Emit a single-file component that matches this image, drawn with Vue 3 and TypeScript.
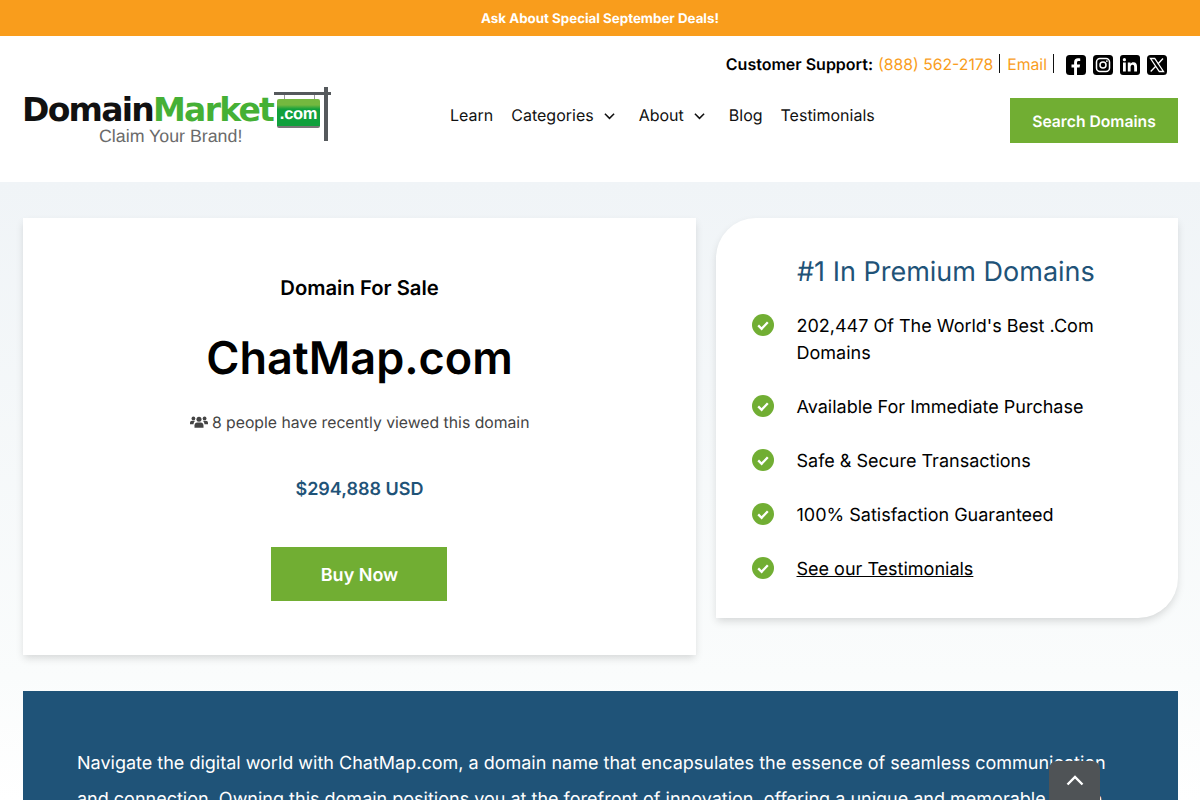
<script setup lang="ts">
const navItems = [
  { label: 'Learn', caret: false },
  { label: 'Categories', caret: true },
  { label: 'About', caret: true },
  { label: 'Blog', caret: false },
  { label: 'Testimonials', caret: false },
]

const perks = [
  "202,447 Of The World's Best .Com Domains",
  'Available For Immediate Purchase',
  'Safe & Secure Transactions',
  '100% Satisfaction Guaranteed',
]
</script>

<template>
  <div class="page">
    <div class="promo">Ask About Special September Deals!</div>

    <header class="site-header">
      <a class="logo">
        <div class="logo-name"><span class="dark">Domain</span><span class="green">Market</span></div>
        <div class="logo-tag">Claim Your Brand!</div>
        <div class="logo-sign">
          <span class="sign-hanger left"></span>
          <span class="sign-hanger right"></span>
          <span class="sign-bar"></span>
          <span class="sign-post"></span>
          <span class="sign-board">.com</span>
        </div>
      </a>

      <div class="support">
        <strong>Customer Support:</strong>
        <a class="orange phone">(888) 562-2178</a>
        <span class="sep"></span>
        <a class="orange">Email</a>
        <span class="sep"></span>
        <div class="socials">
          <svg viewBox="0 0 20 20" class="social">
            <rect width="20" height="20" rx="3.5" fill="#000" />
            <path d="M11 20v-7.6h2.6l.5-3H11V7.7c0-.9.4-1.6 1.7-1.6h1.5V3.5c-.6-.1-1.4-.2-2.2-.2-2.400 0-3.900 1.400-3.900 4v2.100H5.500v3h2.600V20z" fill="#fff" />
          </svg>
          <svg viewBox="0 0 20 20" class="social">
            <rect width="20" height="20" rx="3.5" fill="#000" />
            <rect x="3.500" y="3.500" width="13" height="13" rx="3.500" fill="none" stroke="#fff" stroke-width="1.500" />
            <circle cx="10" cy="10" r="3" fill="none" stroke="#fff" stroke-width="1.500" />
            <circle cx="13.900" cy="6.100" r=".9" fill="#fff" />
          </svg>
          <svg viewBox="0 0 20 20" class="social">
            <rect width="20" height="20" rx="3" fill="#000" />
            <rect x="3" y="7.500" width="2.800" height="9" fill="#fff" />
            <circle cx="4.400" cy="4.700" r="1.600" fill="#fff" />
            <path d="M7.800 7.500h2.700v1.300c.5-.9 1.500-1.500 2.900-1.500 2.700 0 3.600 1.700 3.600 4.300v4.900h-2.800v-4.300c0-1.300-.3-2.400-1.600-2.400-1.400 0-2 1-2 2.400v4.300H7.800z" fill="#fff" />
          </svg>
          <svg viewBox="0 0 20 20" class="social">
            <rect width="20" height="20" rx="3.500" fill="#000" />
            <path d="M3.500 3.500h4.200l8.800 13h-4.200zM16 3.500l-5.300 5.800M9 11l-5.300 5.500" fill="none" stroke="#fff" stroke-width="1.300" />
          </svg>
        </div>
      </div>

      <nav class="nav">
        <a v-for="item in navItems" :key="item.label" class="nav-link">
          {{ item.label }}
          <svg v-if="item.caret" viewBox="0 0 12 8" class="caret">
            <path d="M1 1.500l5 5 5-5" fill="none" stroke="#111" stroke-width="1.700" />
          </svg>
        </a>
      </nav>

      <a class="search-btn">Search Domains</a>
    </header>

    <main class="content">
      <div class="cards">
        <section class="card sale">
          <h3>Domain For Sale</h3>
          <h1>ChatMap.com</h1>
          <p class="views">
            <svg viewBox="0 0 20 14" class="people">
              <circle cx="10" cy="4" r="2.800" />
              <circle cx="3.800" cy="3" r="2.100" />
              <circle cx="16.200" cy="3" r="2.100" />
              <path d="M5 13.500v-2.600c0-2 1.500-3.300 3-3.300h4c1.500 0 3 1.300 3 3.300v2.600z" />
              <path d="M0 9.500V8c0-1.500 1-2.400 2.300-2.400h2.300c.4 0 .7.100 1 .3-1 .8-1.600 2-1.700 3.600zM20 9.500V8c0-1.500-1-2.400-2.300-2.400h-2.300c-.4 0-.7.100-1 .3 1 .8 1.600 2 1.700 3.600z" />
            </svg>
            8 people have recently viewed this domain
          </p>
          <div class="price">$294,888 USD</div>
          <a class="buy-btn">Buy Now</a>
        </section>

        <aside class="card perks">
          <h2>#1 In Premium Domains</h2>
          <ul>
            <li v-for="perk in perks" :key="perk">
              <svg viewBox="0 0 22 22" class="check">
                <circle cx="11" cy="11" r="11" fill="#71ae33" />
                <path d="M6.200 11.400l3.400 3.400 6.200-6.600" fill="none" stroke="#fff" stroke-width="2.300" />
              </svg>
              <span>{{ perk }}</span>
            </li>
            <li>
              <svg viewBox="0 0 22 22" class="check">
                <circle cx="11" cy="11" r="11" fill="#71ae33" />
                <path d="M6.200 11.400l3.400 3.400 6.200-6.600" fill="none" stroke="#fff" stroke-width="2.300" />
              </svg>
              <a class="testimonials">See our Testimonials</a>
            </li>
          </ul>
        </aside>
      </div>

      <section class="about">
        <p>
          Navigate the digital world with ChatMap.com, a domain name that encapsulates the essence of seamless communication
          and connection. Owning this domain positions you at the forefront of innovation, offering a unique and memorable
          online presence for your brand.
        </p>
      </section>
    </main>

    <a class="to-top">
      <svg viewBox="0 0 18 11" width="18" height="11">
        <path d="M1.500 9.500L9 2l7.500 7.500" fill="none" stroke="#fff" stroke-width="2.400" />
      </svg>
    </a>
  </div>
</template>

<style>
html,
body {
  margin: 0;
  height: 800px;
  overflow: hidden;
  background: #fff;
}
</style>

<style scoped>
.page {
  position: relative;
  height: 800px;
  overflow: hidden;
  font-family: Inter, "Liberation Sans", sans-serif;
  color: #000;
  text-rendering: geometricPrecision;
}

.promo {
  height: 36px;
  line-height: 38px;
  text-align: center;
  background: #f99d1c;
  color: #fff;
  font-size: 13.33px;
  font-weight: 700;
}

.site-header {
  display: grid;
  grid-template-columns: auto 1fr auto;
  grid-template-rows: 56px 60px;
  padding: 0 22px 30px 23px;
  background: #fff;
}

.logo {
  position: relative;
  grid-row: 1 / 3;
  width: 310px;
  height: 60px;
  margin-top: 51px;
}

.logo-name {
  margin: 5px 0 0 -1px;
  font-family: "DejaVu Sans", sans-serif;
  font-size: 33px;
  line-height: 36px;
  font-weight: 700;
  letter-spacing: -1.750px;
  white-space: nowrap;
}

.dark {
  color: #111;
}

.green {
  color: #45b035;
}

.logo-tag {
  margin: -2px 0 0 76px;
  font-family: "Liberation Sans", sans-serif;
  font-size: 17.800px;
  line-height: 20px;
  color: #6b6b6b;
  white-space: nowrap;
}

.logo-sign {
  position: absolute;
  left: 251px;
  top: 0;
  width: 58px;
  height: 55px;
}

.sign-bar {
  position: absolute;
  left: 0;
  top: 5px;
  width: 57px;
  height: 3px;
  background: #55595c;
}

.sign-post {
  position: absolute;
  left: 50px;
  top: 0;
  width: 4px;
  height: 54px;
  background: #55595c;
}

.sign-hanger {
  position: absolute;
  top: 8px;
  width: 1px;
  height: 6px;
  background: #9a9a9a;
}

.sign-hanger.left {
  left: 10px;
}

.sign-hanger.right {
  left: 40px;
}

.sign-board {
  position: absolute;
  left: 3px;
  top: 12px;
  width: 43px;
  height: 27px;
  border-radius: 2px;
  border-bottom: 2px solid #777;
  background: linear-gradient(#74b83f 0 22%, #10a03c 38%);
  color: #fff;
  font-family: "Liberation Sans", sans-serif;
  font-size: 16.500px;
  line-height: 31px;
  font-weight: 700;
  text-align: center;
  letter-spacing: -0.300px;
}

.support {
  grid-column: 2 / 4;
  display: flex;
  align-items: center;
  justify-content: flex-end;
  padding: 16px 11px 0 0;
  font-size: 15.750px;
  height: 24px;
}

.support strong {
  font-size: 16px;
  font-weight: 600;
  margin-right: 5px;
}

.orange {
  color: #f99d1c;
}

.sep {
  width: 1px;
  height: 19px;
  background: #111;
  margin: -2px 7px 0 6px;
}

.socials {
  display: flex;
  gap: 7px;
  margin: 2px 0 0 5px;
}

.social {
  width: 20px;
  height: 20px;
  display: block;
}

.nav {
  grid-column: 2;
  display: flex;
  align-items: flex-start;
  gap: 18px;
  padding: 12px 0 0 117px;
  font-size: 16px;
  line-height: 22px;
}

.nav-link {
  display: flex;
  align-items: center;
  color: #111;
}

.caret {
  width: 11px;
  height: 8px;
  margin: 2px 6px 0 10px;
}

.search-btn {
  align-self: start;
  margin-top: 6px;
  width: 168px;
  height: 45px;
  line-height: 47px;
  text-align: center;
  background: #71ae33;
  color: #fff;
  font-size: 15.700px;
  font-weight: 600;
}

.content {
  padding: 36px 22px 0 23px;
  height: 582px;
  background: linear-gradient(#f0f4f7, #fafcfc 80%, #fff);
}

.cards {
  display: flex;
  align-items: flex-start;
  gap: 20px;
}

.card {
  background: #fff;
  box-shadow: 0 4px 8px -1px rgba(0, 0, 0, 0.15);
}

.sale {
  width: 673px;
  height: 437px;
  text-align: center;
  box-sizing: border-box;
  padding-top: 57px;
}

.sale h3 {
  margin: 0;
  font-size: 20.250px;
  line-height: 26px;
  font-weight: 600;
}

.sale h1 {
  margin: 29px 0 0;
  font-size: 45px;
  line-height: 56px;
  font-weight: 600;
}

.views {
  margin: 25px 0 0;
  font-size: 15.750px;
  line-height: 24px;
  color: #444;
}

.people {
  width: 18px;
  height: 14px;
  fill: #444;
  vertical-align: -1px;
}

.price {
  margin-top: 43px;
  font-size: 18px;
  line-height: 24px;
  font-weight: 600;
  color: #1f5378;
}

.buy-btn {
  display: block;
  width: 176px;
  height: 54px;
  margin: 45px 0 0 248px;
  line-height: 57px;
  text-indent: 1px;
  background: #71ae33;
  color: #fff;
  font-size: 18px;
  font-weight: 600;
}

.perks {
  width: 462px;
  height: 400px;
  box-sizing: border-box;
  padding: 36px 36px 0;
  border-radius: 40px 0 40px 0;
}

.perks h2 {
  margin: 0 0 0 45px;
  font-size: 27px;
  line-height: 36px;
  font-weight: 400;
  color: #1f5378;
  white-space: nowrap;
}

.perks ul {
  list-style: none;
  margin: 23px 0 0;
  padding: 0;
}

.perks li {
  display: flex;
  align-items: flex-start;
  gap: 22.500px;
  margin-bottom: 27px;
  font-size: 18px;
  line-height: 27px;
}

.check {
  flex: none;
  width: 22px;
  height: 22px;
  margin-top: 1px;
}

.testimonials {
  text-decoration: underline;
  color: #000;
}

.about {
  margin-top: 36px;
  height: 400px;
  padding: 55px 54px 0;
  background: #1f5378;
  color: #fff;
}

.about p {
  margin: 0;
  font-size: 18px;
  line-height: 36px;
}

.to-top {
  position: absolute;
  left: 1049px;
  top: 761px;
  width: 51px;
  height: 50px;
  display: flex;
  justify-content: center;
  padding-top: 14px;
  box-sizing: border-box;
  border-radius: 8px 8px 0 0;
  background: #4f5356;
}
</style>
